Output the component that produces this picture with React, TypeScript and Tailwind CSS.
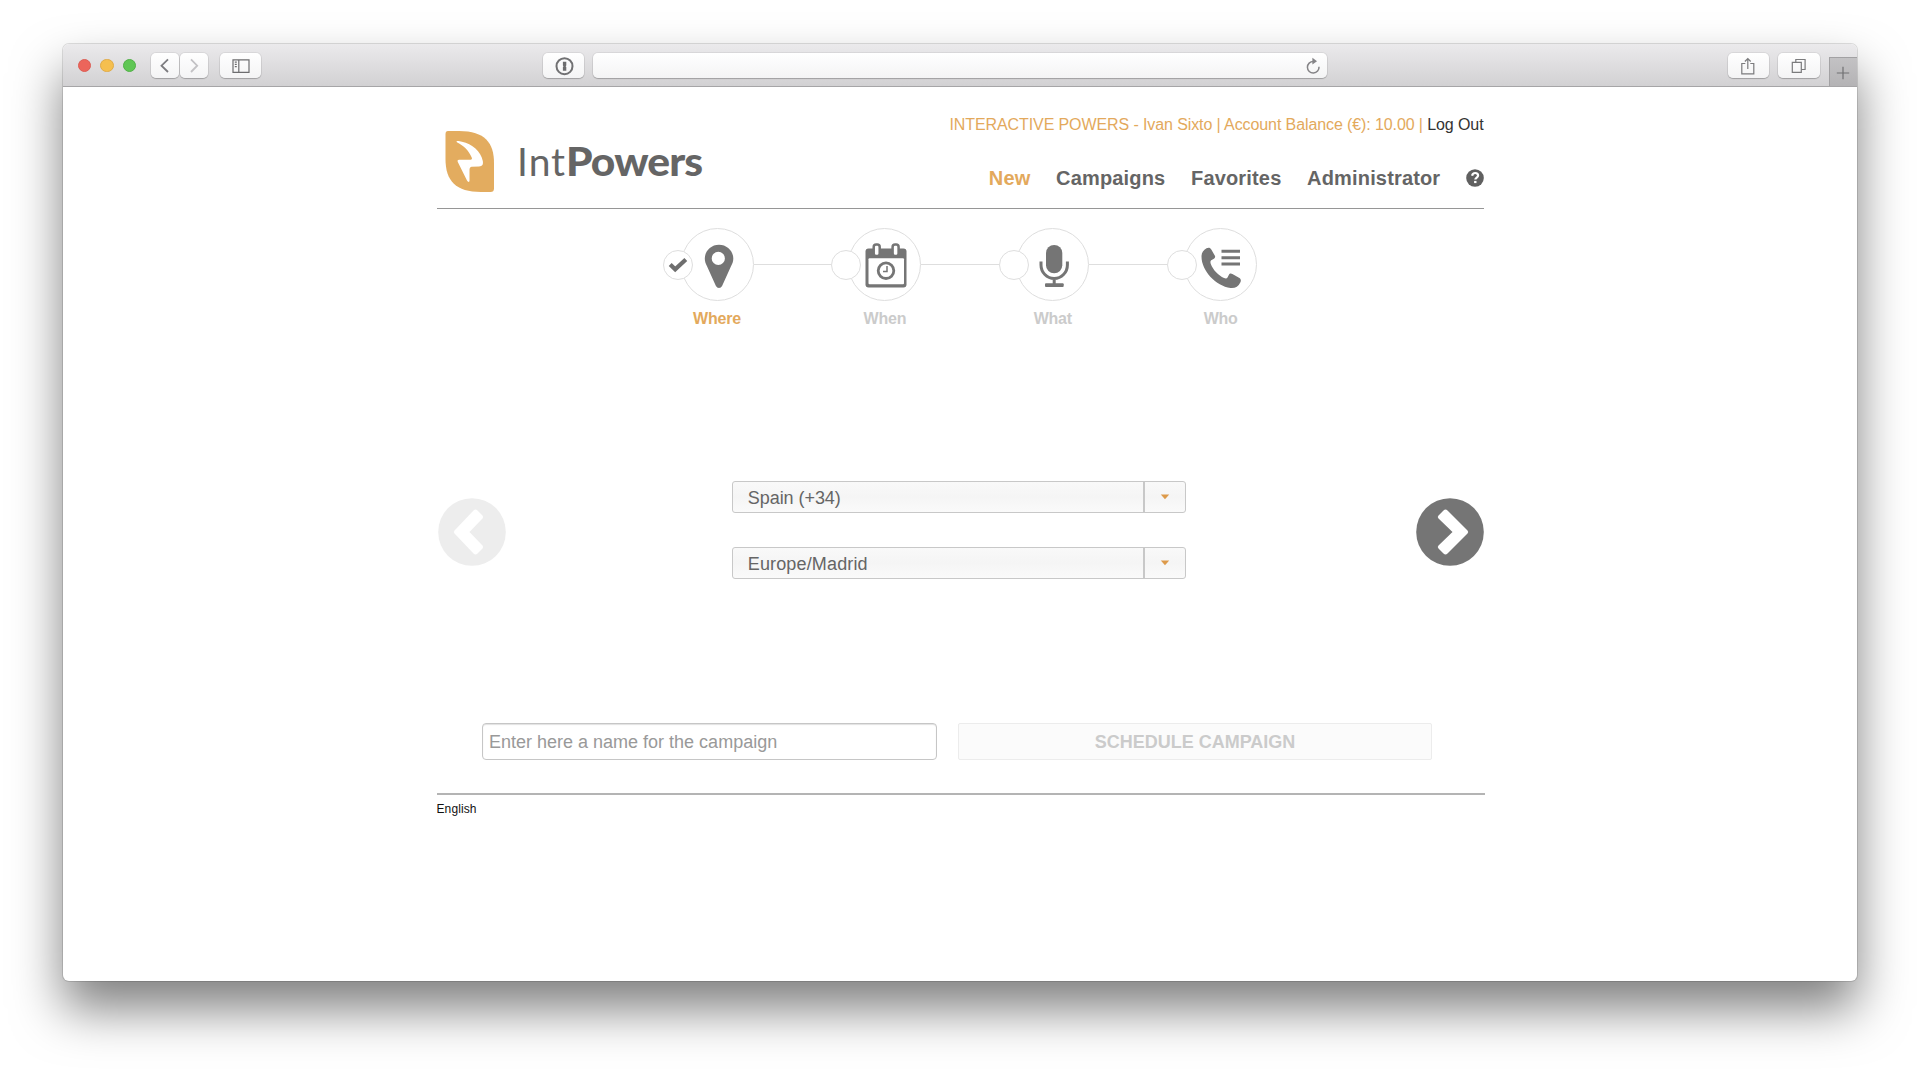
import type { ReactNode } from "react";

const SANS = "font-['Liberation_Sans',Arial,sans-serif]";

function ToolbarButton({ className, children }: { className: string; children?: ReactNode }) {
  return (
    <div
      className={`flex h-[25px] shrink-0 items-center justify-center rounded-[5px] bg-linear-to-b from-white to-[#f4f4f5] shadow-[0_0_0_1px_rgba(0,0,0,0.06),0_1px_1px_rgba(0,0,0,0.2)] ${className}`}
    >
      {children}
    </div>
  );
}

function Toolbar() {
  return (
    <div className="flex h-[43px] items-center rounded-t-[6px] border-b border-[#a6a5a7] bg-linear-to-b from-[#ebeaec] to-[#d2d1d3] pt-px pl-[14.5px]">
      <div className="flex gap-[9px]">
        <span className="size-[13.5px] rounded-full border border-[#dc5d54] bg-[#ec655b]" />
        <span className="size-[13.5px] rounded-full border border-[#e0ab48] bg-[#f5bf4f]" />
        <span className="size-[13.5px] rounded-full border border-[#50b046] bg-[#5fc654]" />
      </div>
      <ToolbarButton className="ml-[14.5px] w-[28px]">
        <svg width="28" height="25" viewBox="0 0 28 25" fill="none" stroke="#7c7b7f" strokeWidth="1.8">
          <path d="M17 6.3 10.5 12.7 17 19" />
        </svg>
      </ToolbarButton>
      <ToolbarButton className="ml-px w-[28px]">
        <svg width="28" height="25" viewBox="0 0 28 25" fill="none" stroke="#c3c2c5" strokeWidth="1.8">
          <path d="M11 6.3 17.2 12.7 11 19" />
        </svg>
      </ToolbarButton>
      <ToolbarButton className="ml-3 w-[41px]">
        <svg className="ml-px" width="18" height="14" viewBox="0 0 18 14" fill="none" stroke="#6d6d6f" strokeWidth="1.2">
          <path d="M1 .8h16v12.6H1zM6.8.8v12.6M2.8 3.2h2M2.8 5.4h2M2.8 7.6h2" />
        </svg>
      </ToolbarButton>
      <ToolbarButton className="ml-[282px] w-[41px]">
        <svg className="ml-px" width="20" height="20" viewBox="0 0 20 20" fill="none">
          <circle cx="10.5" cy="10.2" r="8" stroke="#717173" strokeWidth="2" />
          <path d="M8.9 5.8h3.4v3.6l-.7.8.7.8v3.7H8.9v-3.7l.7-.8-.7-.8z" fill="#6c6c6e" />
        </svg>
      </ToolbarButton>
      <ToolbarButton className="ml-[9px] w-[734px] justify-end pr-[6px]">
        <svg width="16" height="18" viewBox="0 0 16 18" fill="none" stroke="#858487" strokeWidth="1.5">
          <path d="M8.4 4.5a5.8 5.8 0 1 0 5.6 5.3" />
          <path d="M7.4.8v6.6L12 4.3z" fill="#858487" stroke="none" />
        </svg>
      </ToolbarButton>
      <ToolbarButton className="ml-[401px] w-[41px]">
        <svg width="16" height="20" viewBox="0 0 16 20" fill="none" stroke="#7b7b7d" strokeWidth="1.2">
          <path d="M5.3 7.5H1.8v10.3h12V7.5h-3.5M7.8 13V2.8M4.9 5.5l2.9-3 2.9 3" />
        </svg>
      </ToolbarButton>
      <ToolbarButton className="ml-[9px] w-[42px]">
        <svg width="16" height="16" viewBox="0 0 16 16" fill="none" stroke="#7b7b7d" strokeWidth="1.2">
          <path d="M1.3 4.4h9v10h-9zM4.8 4.2V1.5h9.3v10h-3.5" />
        </svg>
      </ToolbarButton>
      <div className="ml-[9px] flex h-[29px] flex-1 items-center justify-center self-end border-t border-l border-[#a2a1a3] bg-linear-to-b from-[#c3c2c4] to-[#b4b3b5]">
        <svg className="mt-px" width="14" height="14" viewBox="0 0 14 14" stroke="#707072" strokeWidth="1.2">
          <path d="M7 .8v12.4M.8 7h12.4" />
        </svg>
      </div>
    </div>
  );
}

function Logo() {
  return (
    <div className="flex">
      <svg className="mt-[44px] ml-2 shrink-0" width="49" height="61" viewBox="0 0 49 61">
        <path
          d="M3 0H14C40 0 49 12 49 32V57.500Q49 61 45.500 61H36C11 61 0.500 50 0.500 28V3Q.5 0 3 0Z"
          fill="#e3ac5f"
        />
        <path
          d="M11.600 10.200C12.500 9.500 15 10.200 17 10.800C27 13 36 20.500 37.800 30C38.400 33.500 37.500 35.200 34 35.500L26.500 35.800C24.800 36 24.500 37.500 24.500 39.500V49.500C24.500 51.500 23 51.300 22 49.500L12.800 31C12.200 29.500 12.800 28.800 14 28.800H25.500C27 28.800 27.300 27.800 26.600 26.300C24 20 18.500 14.500 12.300 11.600Q11.300 11 11.600 10.200Z"
          fill="#fff"
        />
      </svg>
      <div className="mt-[50px] ml-[23px] font-['Lato',sans-serif] text-[39px] leading-[48px] whitespace-nowrap text-[#656565]">
        <span className="inline-block tracking-[1px]">Int</span>
        <span className="inline-block origin-left scale-x-[1.09] font-black tracking-[-0.8px]">Powers</span>
      </div>
    </div>
  );
}

function Header() {
  return (
    <header className="flex h-[122px] justify-between border-b border-[#969696]">
      <Logo />
      <div className="flex flex-col items-end whitespace-nowrap">
        <p className="mt-[28px] mr-[0.5px] text-[16px] leading-5 tracking-[-0.1px] text-[#e3a95c]">
          INTERACTIVE POWERS - Ivan Sixto | Account Balance (€): 10.00 | <a className="text-[#333]">Log Out</a>
        </p>
        <nav className="mt-[31px] flex items-center gap-[25.7px] text-[20px] leading-6 font-bold tracking-[0.16px] text-[#656565]">
          <a className="text-[#e3a95c]">New</a>
          <a>Campaigns</a>
          <a>Favorites</a>
          <a>Administrator</a>
          <svg width="18" height="18" viewBox="0 0 18 18">
            <circle cx="9" cy="9" r="8.800" fill="#606060" />
            <path d="M6.100 6.700C6.400 4.900 7.700 4 9.200 4s2.900 1 2.900 2.600C12.100 8.500 9.300 8.700 9.300 10.600" fill="none" stroke="#fff" strokeWidth="2.200" />
            <path d="M8.100 11.900h2.400v2.200H8.100z" fill="#fff" />
          </svg>
        </nav>
      </div>
    </header>
  );
}

function PinIcon() {
  return (
    <path
      fillRule="evenodd"
      d="M38 16.800C30 16.800 23.800 23 23.800 30.500C23.800 33.500 24.600 35.500 26 38.300L34.800 57.700Q35.900 60 38 60T41.200 57.700L50 38.300C51.500 35.500 52.300 33.500 52.300 30.500C52.300 23 46 16.800 38 16.800ZM37.300 23.800a6.600 6.600 0 1 1 0 13.200a6.600 6.600 0 1 1 0-13.200Z"
    />
  );
}

function CalendarIcon() {
  return (
    <>
      <rect x="17.500" y="20.500" width="41" height="39" rx="3" />
      <rect x="20.500" y="30.300" width="35.500" height="26" rx="1" fill="#fff" />
      <g fill="#fff" stroke="#757575" strokeWidth="2.500">
        <rect x="25.700" y="16.500" width="6" height="11.500" rx="2.500" />
        <rect x="44.600" y="16.500" width="6" height="11.500" rx="2.500" />
      </g>
      <circle cx="38" cy="42.700" r="7.800" fill="#fff" stroke="#757575" strokeWidth="2.800" />
      <path d="M39 38v5.500h-4" fill="none" stroke="#757575" strokeWidth="1.500" />
    </>
  );
}

function MicIcon() {
  return (
    <>
      <rect x="30" y="17" width="16.300" height="28.300" rx="8.100" />
      <path d="M25 33.500V37a13.200 13.500 0 0 0 26.400 0V33.500M38.200 50.500V56" fill="none" stroke="#757575" strokeWidth="3" />
      <rect x="29" y="55.300" width="18.700" height="3.700" rx="1" />
    </>
  );
}

function PhoneIcon() {
  return (
    <>
      <path d="M22.500 20.300C24.500 19.200 26.200 19.600 27.300 21.500L30.600 27.200C31.700 29 31.100 30 29.500 31L27.200 32.300C26.200 33 26.300 34.500 26.800 36C29 42 34.500 47.500 40 50C41.800 50.800 43 50.500 43.500 49.400L44.800 47C45.600 45.400 46.800 45.100 48.400 46L55 49.700C57 50.900 57.300 52.400 56.300 54.500C54.300 58.500 51 60.500 46.500 60C32 58 17.500 43 17.500 28.500C17.500 25 19.300 22 22.500 20.300Z" />
      <path d="M37.500 23.300H56M37.500 29.700H56M37.500 36H56" stroke="#757575" strokeWidth="3" />
    </>
  );
}

const steps = [
  { label: "Where", icon: <PinIcon />, active: true },
  { label: "When", icon: <CalendarIcon />, active: false },
  { label: "What", icon: <MicIcon />, active: false },
  { label: "Who", icon: <PhoneIcon />, active: false },
];

function Stepper() {
  return (
    <div className="mt-[19px] ml-[226px] flex">
      {steps.map((step, i) => (
        <div key={step.label} className="flex items-start">
          <div className="z-10 mt-[22px] flex size-[30px] items-center justify-center rounded-full border border-[#dedede] bg-white">
            {step.active && (
              <svg width="20" height="16" viewBox="0 0 20 16" fill="none" stroke="#6e6e6e" strokeWidth="4.200">
                <path d="M2.200 7.500 7.200 12.300 17.800 2.500" />
              </svg>
            )}
          </div>
          <div className="-ml-[12.5px] flex w-[73px] flex-col items-center">
            <div className="size-[73px] rounded-full border border-[#dedede]">
              <svg className="-m-px" width="73" height="73" viewBox="0 0 73 73" fill="#757575">
                {step.icon}
              </svg>
            </div>
            <span
              className={`mt-[8px] h-[19px] text-[16px] leading-5 font-bold tracking-[-0.2px] ${step.active ? "text-[#e3a95c]" : "text-[#cbcbcb]"}`}
            >
              {step.label}
            </span>
          </div>
          {i < steps.length - 1 && <div className="mt-9 h-px w-[77.400px] bg-[#dedede]" />}
        </div>
      ))}
    </div>
  );
}

function Select({ value, textClass }: { value: string; textClass: string }) {
  return (
    <div className="flex h-[32px] w-[454px] rounded-[3px] border border-[#c8c8c8] bg-linear-to-b from-[#f9f9f9] via-[#f5f5f5] to-[#fafafa]">
      <span className={`flex-1 pl-[15px] text-[18px] leading-[32px] text-[#656565] ${textClass}`}>{value}</span>
      <span className="flex w-[42px] items-center justify-center border-l-2 border-[#c8c8c8]">
        <svg width="10" height="6" viewBox="0 0 10 6" fill="#dd9a4a">
          <path d="M.8.5h8.400L5 5.300z" />
        </svg>
      </span>
    </div>
  );
}

function ArrowButton({ next = false }: { next?: boolean }) {
  return (
    <svg width="68" height="68" viewBox="0 0 68 68">
      <circle cx="34" cy="34" r="33.800" fill={next ? "#757575" : "#ededed"} />
      <path
        d={next
          ? "M22.500 17.500 27.500 12.500Q29.500 10.500 31.500 12.500L51.500 32.500Q53 34 51.500 35.500L31.500 55.500Q29.500 57.500 27.500 55.500L22.500 50.500Q21 49 22.500 47.500L36.500 34 22.500 20.500Q21 19 22.500 17.500Z"
          : "M44.500 17.500 39.500 12.500Q37.500 10.500 35.500 12.500L16.500 32.500Q15 34 16.500 35.500L35.500 55.500Q37.500 57.500 39.500 55.500L44.500 50.500Q46 49 44.500 47.500L31.500 34 44.500 20.500Q46 19 44.500 17.500Z"}
        fill="#fff"
      />
    </svg>
  );
}

export default function App() {
  return (
    <div className={`flex h-[1080px] w-[1920px] items-start justify-center overflow-hidden bg-white pt-[44px] ${SANS}`}>
      <div className="h-[937px] w-[1794px] rounded-[6px] bg-white shadow-[0_0_0_1px_rgba(0,0,0,0.12),0_28px_50px_0_rgba(0,0,0,0.5)]">
        <Toolbar />
        <main className="ml-[374px] flex w-[1047px] flex-col">
          <Header />
          <Stepper />
          <section className="mt-[153px] flex items-start justify-between">
            <div className="mt-[17px] ml-px">
              <ArrowButton />
            </div>
            <div className="mr-[4px] flex flex-col gap-[34px]">
              <Select value="Spain (+34)" textClass="tracking-[-0.05px]" />
              <Select value="Europe/Madrid" textClass="tracking-[0.150px]" />
            </div>
            <div className="mt-[17px] mr-[0.500px]">
              <ArrowButton next />
            </div>
          </section>
          <section className="mt-[144px] ml-[45px] flex gap-[21px]">
            <input
              className="h-[37px] w-[455px] rounded-[4px] border border-[#c6c6c6] pt-px pl-[6px] text-[18px] text-[#656565] shadow-[inset_0_1px_1px_rgba(0,0,0,0.12)] placeholder:text-[#999]"
              placeholder="Enter here a name for the campaign"
            />
            <button className="h-[37px] w-[474px] rounded-[2px] border border-[#ececec] bg-[#fbfbfb] pt-px text-[18px] font-bold text-[#cbcbcb]">
              SCHEDULE CAMPAIGN
            </button>
          </section>
          <footer className="mt-[33px] w-[1048px] border-t-2 border-[#b4b4b4]">
            <p className="-ml-[0.500px] pt-[6px] text-[12px] leading-4 tracking-[0.1px] text-[#111]">English</p>
          </footer>
        </main>
      </div>
    </div>
  );
}
